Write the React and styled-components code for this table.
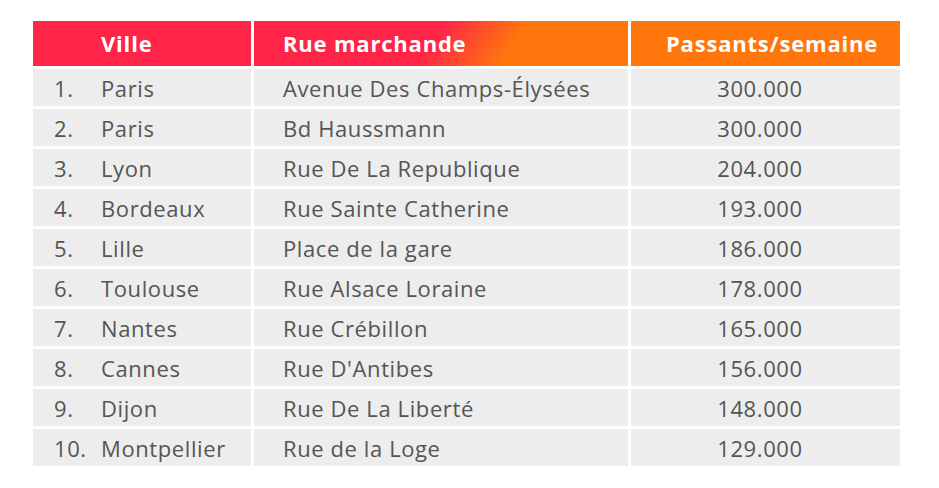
import React from 'react';
import styled, { createGlobalStyle } from 'styled-components';

const rows = [
    ['Paris', 'Avenue Des Champs-Élysées', '300.000'],
    ['Paris', 'Bd Haussmann', '300.000'],
    ['Lyon', 'Rue De La Republique', '204.000'],
    ['Bordeaux', 'Rue Sainte Catherine', '193.000'],
    ['Lille', 'Place de la gare', '186.000'],
    ['Toulouse', 'Rue Alsace Loraine', '178.000'],
    ['Nantes', 'Rue Crébillon', '165.000'],
    ['Cannes', "Rue D'Antibes", '156.000'],
    ['Dijon', 'Rue De La Liberté', '148.000'],
    ['Montpellier', 'Rue de la Loge', '129.000'],
];

const GlobalStyle = createGlobalStyle`
    body {
        margin: 0;
        background: #ffffff;
        font-family: "Open Sans", "Noto Sans", sans-serif;
    }
`;

const App = () => {
    return (
        <>
            <GlobalStyle />
            <Page>
                <Table>
                    <HeadCell $variant="red" $pad="68px">Ville</HeadCell>
                    <HeadCell $variant="mix" $pad="29px">Rue marchande</HeadCell>
                    <HeadCell $variant="orange" $pad="35px">Passants/semaine</HeadCell>
                    {rows.map(([city, street, count], i) => (
                        <React.Fragment key={i}>
                            <Cell>
                                <Rank>{i + 1}.</Rank>
                                <span>{city}</span>
                            </Cell>
                            <Cell $pad="29px">{street}</Cell>
                            <NumberCell>{count}</NumberCell>
                        </React.Fragment>
                    ))}
                </Table>
            </Page>
        </>
    );
};

const Page = styled.div`
    padding: 21px 0 0 33px;
`;

const Table = styled.div`
    display: grid;
    grid-template-columns: 218px 374px 269px;
    grid-template-rows: 45px;
    grid-auto-rows: 37px;
    gap: 3px;
    width: 867px;
`;

const backgrounds = {
    red: '#ff2448',
    orange: '#ff760d',
    mix: 'linear-gradient(124deg, #ff2448 47%, #ff760d 68%)',
};

const HeadCell = styled.div`
    display: flex;
    align-items: center;
    padding-left: ${(p) => p.$pad};
    padding-bottom: 2px;
    background: ${(p) => backgrounds[p.$variant]};
    color: #ffffff;
    font-weight: 700;
    font-size: 22px;
    letter-spacing: 0.8px;
`;

const Cell = styled.div`
    display: flex;
    align-items: center;
    padding-left: ${(p) => p.$pad || '21px'};
    background: #ededed;
    color: #555555;
    font-size: 22px;
    letter-spacing: 0.6px;
    white-space: nowrap;
`;

const Rank = styled.span`
    width: 47px;
    flex-shrink: 0;
`;

const NumberCell = styled(Cell)`
    justify-content: center;
    padding-left: 0;
    padding-right: 11px;
`;

export default App;
